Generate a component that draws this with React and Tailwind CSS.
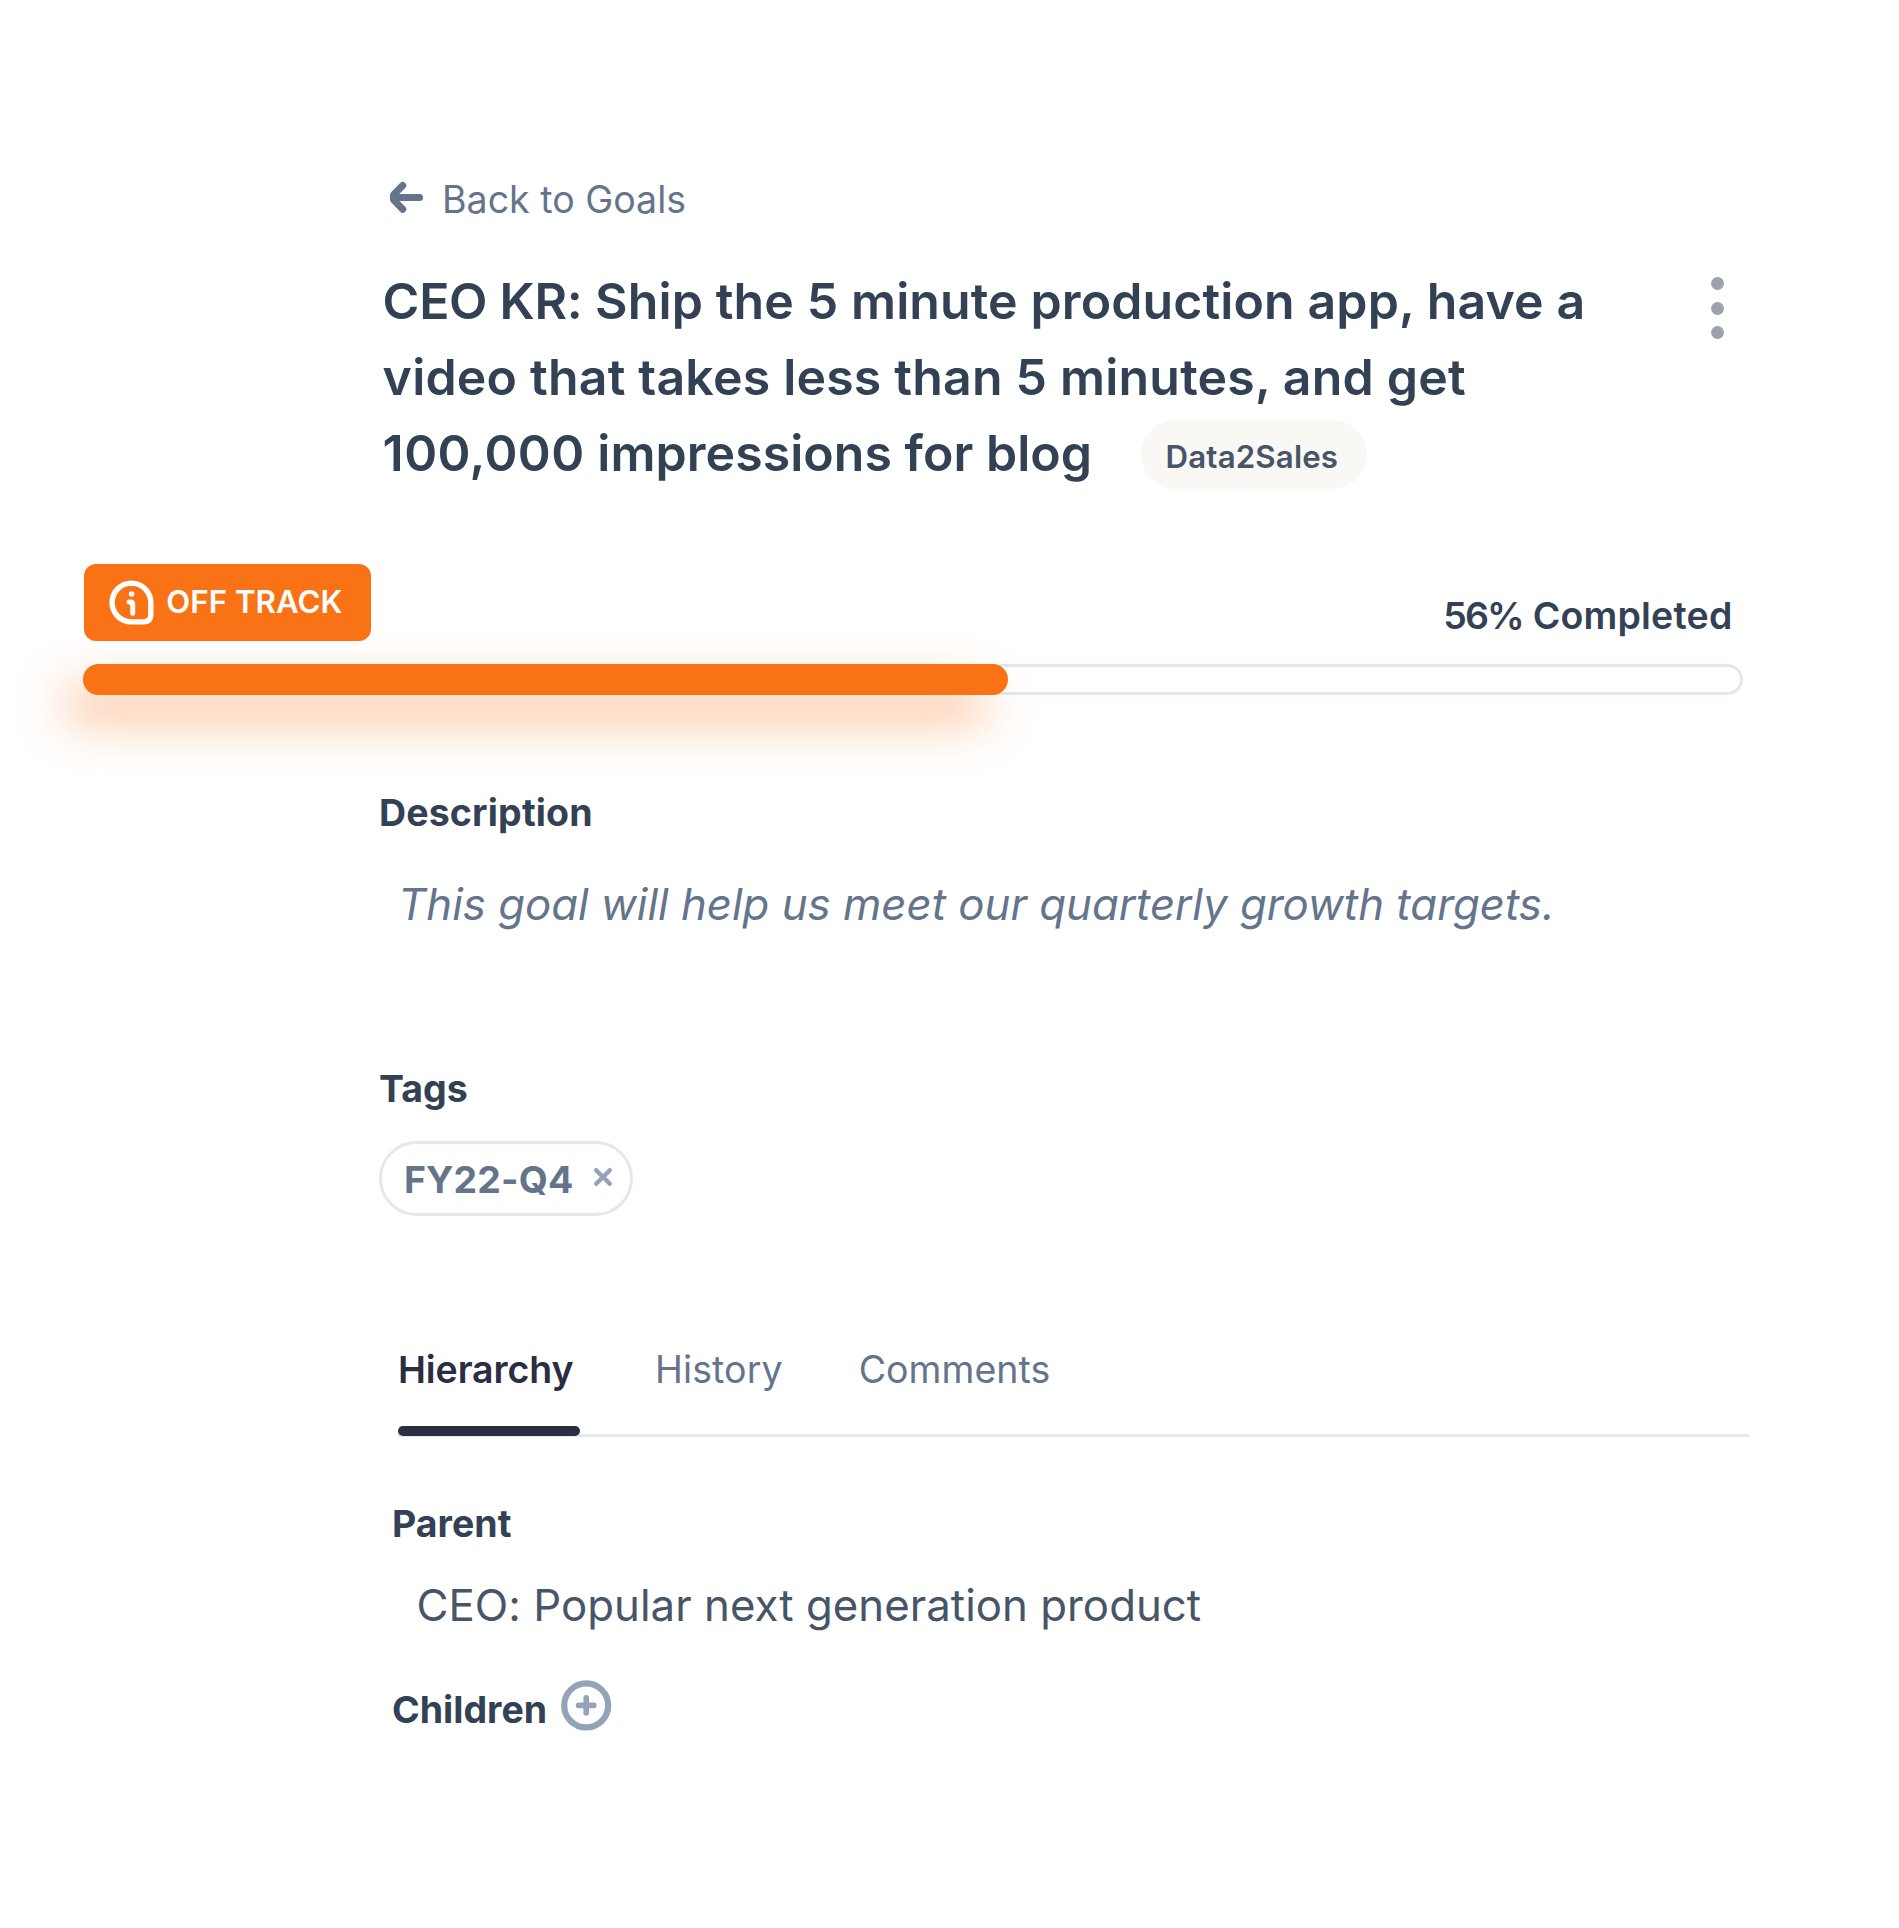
import React from "react";

function ArrowLeft() {
  return (
    <svg className="mt-[5px] h-8 w-[34px] shrink-0" viewBox="0 0 34 32" fill="none" stroke="currentColor" strokeWidth="7" strokeLinecap="round" strokeLinejoin="round">
      <path d="M12.7 4.5 4.1 13.3Q1.9 16.4 4.1 19.4L12.7 28.2M4 16.4H29.6" />
    </svg>
  );
}

function InfoBubble() {
  return (
    <svg className="h-[45px] w-[45px] shrink-0" viewBox="0 0 45 45" fill="none" stroke="currentColor" strokeLinecap="round" strokeLinejoin="round">
      <path strokeWidth="5.4" d="M22.5 3.1A19.4 19.4 0 0 1 41.8 22.5V34.6Q41.8 41.9 34.6 41.9H22.5A19.4 19.4 0 0 1 22.5 3.1Z" />
      <path strokeWidth="5" d="M20.1 21.9H21.6Q23.7 21.9 23.7 24V33.3" />
      <circle cx="22.6" cy="14" r="2.8" fill="currentColor" stroke="none" />
    </svg>
  );
}

function CloseIcon() {
  return (
    <svg className="h-5 w-5 shrink-0" viewBox="0 0 20 20" fill="none" stroke="currentColor" strokeWidth="4.4" strokeLinecap="round">
      <path d="M3.2 3.2 16.8 16.8M16.8 3.2 3.2 16.8" />
    </svg>
  );
}

function PlusCircle() {
  return (
    <svg className="h-[51px] w-[51px] shrink-0" viewBox="0 0 51 51" fill="none" stroke="currentColor" strokeWidth="6.2" strokeLinecap="round">
      <circle cx="25.2" cy="25.4" r="22" />
      <path strokeWidth="5.6" d="M25.2 17.8V33M17.6 25.4H32.8" />
    </svg>
  );
}

export default function App() {
  return (
    <div className="flex h-[1928px] w-[1899px] flex-col overflow-hidden bg-white pt-[176px] font-['Inter',sans-serif] text-[37.5px] leading-[48px] text-[#334155]">
      <a className="ml-[390px] flex items-start text-[#64748b]">
        <ArrowLeft />
        <span className="ml-[18px] tracking-[0.02px]">Back to Goals</span>
      </a>

      <header className="mt-[39px] ml-[382.6px] flex h-[228px] items-start justify-between pr-[175px]">
        <h1 className="text-[50px] leading-[76px] font-semibold whitespace-nowrap">
          <div className="tracking-[0.12px]">
            <span className="tracking-[-0.3px]">CEO KR:</span> Ship the 5 minute production app, have a
          </div>
          <div className="tracking-[0.2px]">video that takes less than 5 minutes, and get</div>
          <div className="flex">
            <span className="w-[758.4px] tracking-[0.05px]">
              <span className="tracking-[0.4px]">100,000</span> impressions for blog
            </span>
            <span className="mt-[5px] flex h-[69px] w-[226px] items-center rounded-full bg-[#f9f8f4] pt-[5px] pl-[24.5px] text-[31.25px] leading-10 tracking-[0.15px] text-[#475569]">
              Data2Sales
            </span>
          </div>
        </h1>
        <div className="mt-[14px] flex flex-col gap-[11.6px]">
          <span className="h-[13px] w-[13px] rounded-full bg-[#9ca3af]" />
          <span className="h-[13px] w-[13px] rounded-full bg-[#9ca3af]" />
          <span className="h-[13px] w-[13px] rounded-full bg-[#9ca3af]" />
        </div>
      </header>

      <section className="mt-[73px] ml-[83px] w-[1660px]">
        <div className="relative z-10 flex h-[77px] justify-between">
          <div className="ml-[1.3px] flex w-[286.7px] items-center rounded-[12px] bg-[#f97316] pl-[25px] text-[31.25px] font-semibold text-white">
            <InfoBubble />
            <span className="-mt-[2px] ml-[12px]">OFF TRACK</span>
          </div>
          <p className="mt-[28px] mr-[10.5px] font-semibold tracking-[0.2px]">
            <span className="tracking-[-1.8px]">56%</span> Completed
          </p>
        </div>
        <div className="mt-[23.4px] h-[30.6px] rounded-full shadow-[inset_0_0_0_3px_#e2e8f0]">
          <div className="relative h-full w-[925px]">
            <div className="absolute top-[25px] -left-[20px] h-full w-full rounded-full bg-[#f97316] opacity-50 blur-[25px]" />
            <div className="relative h-full rounded-full bg-[#f97316]" />
          </div>
        </div>
      </section>

      <section className="mt-[94px] ml-[379px]">
        <h2 className="relative font-bold tracking-[0.15px]">Description</h2>
        <p className="mt-[40px] ml-[19px] text-[43.75px] leading-[56px] text-[#64748b] italic">
          This goal will help us meet our quarterly growth targets.
        </p>
      </section>

      <section className="mt-[132px] ml-[379px]">
        <h2 className="font-bold">Tags</h2>
        <div className="mt-[28px] flex h-[75px] w-[254px] items-center rounded-full border-[3px] border-[#e2e8f0] pl-[22px] font-bold text-[#64748b]">
          <span className="mt-[3px] tracking-[0.1px]">FY22-Q4</span>
          <span className="-mt-[2px] ml-[20px] text-[#94a3b8]">
            <CloseIcon />
          </span>
        </div>
      </section>

      <section className="mt-[130px] ml-[398px] w-[1351px]">
        <nav className="flex h-[91px] border-b-[3px] border-[#e2e8f0] text-[#64748b]">
          <div className="flex h-[90px] w-[182px] shrink-0 flex-col justify-between">
            <span className="font-semibold tracking-[-0.1px] text-[#2b2d42]">Hierarchy</span>
            <span className="h-[10px] rounded-full bg-[#2b2d42]" />
          </div>
          <span className="ml-[75px] tracking-[0.1px]">History</span>
          <span className="ml-[76px] tracking-[0.05px]">Comments</span>
        </nav>
      </section>

      <section className="mt-[63px] ml-[392px]">
        <h2 className="font-bold">Parent</h2>
        <p className="mt-[30px] ml-[24.5px] text-[43.75px] leading-[56px] tracking-[0.03px] text-[#475569]">CEO: Popular next generation product</p>
        <div className="mt-[46px] flex items-start">
          <h2 className="mt-[6px] font-bold">Children</h2>
          <span className="ml-[14px] text-[#94a3b8]">
            <PlusCircle />
          </span>
        </div>
      </section>
    </div>
  );
}
